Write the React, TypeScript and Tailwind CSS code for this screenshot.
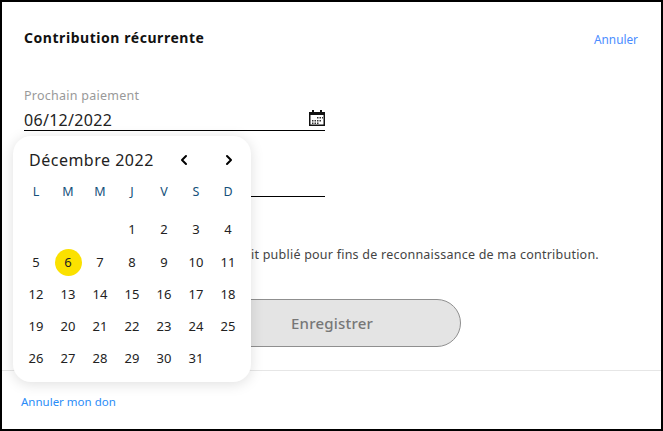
import { ChevronLeft, ChevronRight } from 'lucide-react'

const days = ['L', 'M', 'M', 'J', 'V', 'S', 'D']
const cells = [0, 0, 0, ...Array.from({ length: 31 }, (_, i) => i + 1)]

function CalendarIcon() {
  return (
    <svg width="16" height="16" viewBox="0 0 16 16" className="block -mt-[4px]">
      <path d="M3 0h2v2h6V0h2v2h3v14H0V2h3z" fill="#111" />
      <rect x="1.5" y="5" width="13" height="9.5" fill="#fff" />
      <path d="M8 7h1.5v1.5H8zM10.5 7H12v1.5h-1.5zM13 7h1v1.5h-1zM3 10h1.5v1.5H3zM5.5 10H7v1.5H5.5zM8 10h1.5v1.5H8zM10.5 10H12v1.5h-1.5zM3 12.5h1.5V14H3zM5.5 12.5H7V14H5.5zM8 12.5h1.5V14H8z" fill="#333" />
    </svg>
  )
}

function DatePopover() {
  return (
    <div className="absolute left-[11px] top-[134px] z-10 w-[238px] h-[246px] rounded-[18px] bg-white shadow-[0_2px_14px_rgba(0,0,0,0.13)] px-[7px]">
      <div className="flex items-center h-[46px] pl-[9px] pt-[2px]">
        <span className="text-[16px] text-[#222] w-[147px] whitespace-nowrap tracking-[0.5px]">Décembre 2022</span>
        <ChevronLeft className="w-[16px] h-[16px] text-black" strokeWidth={3} />
        <ChevronRight className="w-[16px] h-[16px] text-black ml-[29px]" strokeWidth={3} />
      </div>
      <div className="grid grid-cols-[repeat(7,32px)] h-[20px] items-center text-center text-[12.5px] text-[#14507a]">
        {days.map((d, i) => <span key={i}>{d}</span>)}
      </div>
      <div className="grid grid-cols-[repeat(7,32px)] auto-rows-[32.25px] mt-[12px] text-center text-[13px] text-[#222]">
        {cells.map((d, i) => (
          <div key={i} className="flex items-center justify-center">
            {d > 0 && (
              <span className={d === 6 ? 'flex items-center justify-center w-[27px] h-[27px] rounded-full bg-[#fbe100]' : ''}>{d}</span>
            )}
          </div>
        ))}
      </div>
    </div>
  )
}

export default function App() {
  return (
    <div className="relative w-[663px] h-[431px] overflow-hidden border-2 border-black bg-white font-['Noto_Sans','Liberation_Sans',sans-serif]">
      <div className="flex justify-between items-start pl-[22px] pr-[23px] pt-[26px]">
        <h2 className="text-[14px] leading-[20px] font-bold text-[#111] tracking-[0.55px]">Contribution récurrente</h2>
        <a className="text-[11.8px] leading-[16px] mt-[3px] text-[#4a8cff]">Annuler</a>
      </div>
      <div className="ml-[22px] w-[301px] mt-[40px]">
        <label className="block text-[12.5px] leading-[16px] text-[#999] tracking-[0.25px]">Prochain paiement</label>
        <div className="flex items-center justify-between border-b border-black h-[27px] pt-[5px]">
          <span className="text-[16px] text-[#222] tracking-[0.3px]">06/12/2022</span>
          <CalendarIcon />
        </div>
      </div>
      <div className="ml-[22px] w-[301px] h-[66px] border-b border-black" />
      <p className="ml-[22px] mt-[50px] pl-[227px] h-[16px] text-[12.5px] leading-[16px] text-[#444] whitespace-nowrap tracking-[0.23px]">
        it publié pour fins de reconnaissance de ma contribution.
      </p>
      <div className="ml-[201px] mt-[36px] flex items-center justify-center w-[258px] h-[48px] rounded-full border border-[#8f8f8f] bg-[#e4e4e4] text-[15px] font-medium text-[#777] tracking-[0.2px]">
        Enregistrer
      </div>
      <div className="mt-[23px] border-t border-[#e6e6e6] pl-[19px] pt-[23px]">
        <a className="block text-[11.5px] leading-[16px] text-[#2a8cf7]">Annuler mon don</a>
      </div>
      <DatePopover />
    </div>
  )
}
